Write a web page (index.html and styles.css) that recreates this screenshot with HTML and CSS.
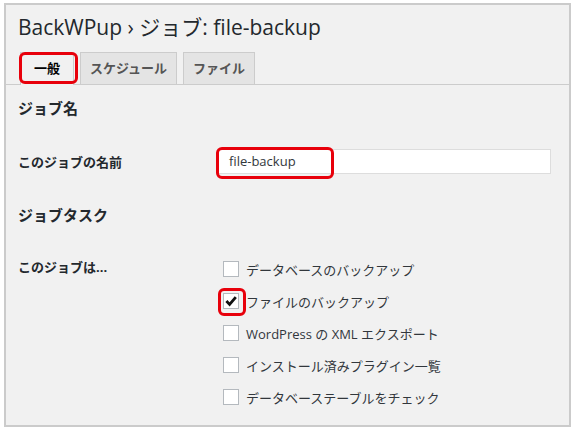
FILE: index.html
```html
<!DOCTYPE html>
<html lang="ja">
<head>
<meta charset="utf-8">
<link rel="stylesheet" href="styles.css">
</head>
<body>
<div class="frame">
  <h1 class="title">BackWPup › ジョブ: file-backup</h1>
  <nav class="tabs">
    <span class="tab active"><span class="mark mark-tab"></span>一般</span>
    <span class="tab">スケジュール</span>
    <span class="tab">ファイル</span>
  </nav>
  <h2 class="sec">ジョブ名</h2>
  <div class="row row-name">
    <div class="label">このジョブの名前</div>
    <div class="field">
      <div class="input"><span class="mark mark-input"></span>file-backup</div>
    </div>
  </div>
  <h2 class="sec sec2">ジョブタスク</h2>
  <div class="row row-tasks">
    <div class="label">このジョブは...</div>
    <ul class="checks">
      <li><span class="box"></span>データベースのバックアップ</li>
      <li><span class="box checked"><span class="mark mark-box"></span><svg viewBox="0 0 16 16" width="16" height="16"><path d="M3.4 8 L6.6 11.4 L12.8 4.2" fill="none" stroke="#111" stroke-width="2.8"/></svg></span>ファイルのバックアップ</li>
      <li><span class="box"></span>WordPress の XML エクスポート</li>
      <li><span class="box"></span>インストール済みプラグイン一覧</li>
      <li><span class="box"></span>データベーステーブルをチェック</li>
    </ul>
  </div>
</div>
</body>
</html>
```
FILE: styles.css
```css
html, body { margin: 0; padding: 0; background: #fff; }
body {
  font-family: "Open Sans", "Noto Sans CJK JP", sans-serif;
  color: #23282d;
}
.frame {
  margin: 3px 0 0 4px;
  width: 567px;
  height: 424px;
  box-sizing: border-box;
  border: 2px solid #cbcbcb;
  background: #f1f1f1;
}
.title {
  margin: 7px 0 0 12px;
  font-size: 21px;
  line-height: 30px;
  font-weight: 400;
  color: #23282d;
}
.tabs {
  display: flex;
  gap: 6px;
  margin-top: 10px;
  padding-left: 14px;
  border-bottom: 1px solid #ccc;
  height: 32px;
  align-items: flex-end;
}
.tab {
  position: relative;
  box-sizing: border-box;
  height: 32px;
  padding: 0 9px;
  border: 1px solid #ccc;
  border-bottom: none;
  background: #e4e4e4;
  color: #555;
  font-size: 13px;
  font-weight: 700;
  line-height: 31px;
}
.tab.active {
  background: #f1f1f1;
  color: #000;
  height: 33px;
  margin-bottom: -1px;
  padding: 0 13px;
}
.mark {
  position: absolute;
  border: 3px solid #e8000b;
  border-radius: 6px;
  box-sizing: border-box;
  pointer-events: none;
}
.mark-tab { left: -2px; top: -1px; width: 59px; height: 32px; }
.sec {
  margin: 12px 0 0 12px;
  font-size: 15px;
  line-height: 22px;
  font-weight: 700;
  color: #23282d;
}
.sec2 { margin-top: 30px; }
.row { display: flex; margin-left: 12px; }
.label {
  width: 200px;
  font-size: 13px;
  font-weight: 700;
  color: #23282d;
}
.row-name { margin-top: 30px; align-items: center; }
.input {
  position: relative;
  width: 333px;
  height: 25px;
  box-sizing: border-box;
  border: 1px solid #ddd;
  background: #fff;
  font-size: 13px;
  line-height: 23px;
  padding-left: 10px;
  color: #32373c;
}
.mark-input { left: -3px; top: -3px; width: 118px; height: 32px; }
.row-tasks { margin-top: 27px; }
.row-tasks .label { padding-top: 4px; }
.checks {
  list-style: none;
  margin: 0;
  padding: 0 0 0 5px;
}
.checks li {
  display: flex;
  align-items: center;
  height: 32px;
  font-size: 13px;
  color: #32373c;
}
.box {
  position: relative;
  width: 16px;
  height: 16px;
  box-sizing: border-box;
  border: 1px solid #b4b9be;
  background: #fff;
  margin-right: 7px;
  flex: none;
}
.box svg { position: absolute; left: -1px; top: -1px; }
.mark-box { left: -6px; top: -6px; width: 28px; height: 28px; }
```
